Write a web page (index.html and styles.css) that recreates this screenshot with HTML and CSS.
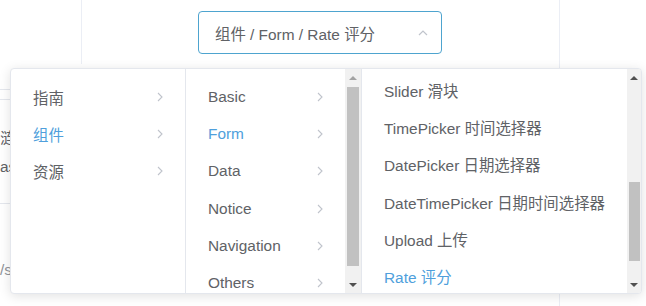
FILE: index.html
```html
<!DOCTYPE html>
<html lang="zh-CN">
<head>
    <meta charset="UTF-8">
    <title>Cascader 级联选择器</title>
    <link rel="stylesheet" href="styles.css">
</head>
<body>
    <div class="page">
        <div class="side">
            <div class="side-rule"></div>
            <div class="side-rule second"></div>
            <p class="side-text first">涟</p>
            <p class="side-text">as</p>
            <div class="side-rule third"></div>
            <p class="side-text last">/s</p>
        </div>
        <div class="main">
            <div class="select">
                <span class="select-label">组件 / Form / Rate 评分</span>
                <svg class="select-arrow" width="10" height="7" viewBox="0 0 10 7">
                    <polyline points="1,6 5,2 9,6" fill="none" stroke="#c0c4cc" stroke-width="1.2"/>
                </svg>
            </div>
        </div>
        <div class="aside"></div>
    </div>

    <!-- 级联下拉菜单 -->
    <div class="cascader-menus">
        <div class="menu menu-first">
            <ul class="menu-list">
                <li class="menu-item">指南<svg class="chevron" width="6" height="10" viewBox="0 0 6 10"><polyline points="1,1 5,5 1,9" fill="none" stroke="#c0c4cc" stroke-width="1.1"/></svg></li>
                <li class="menu-item active">组件<svg class="chevron" width="6" height="10" viewBox="0 0 6 10"><polyline points="1,1 5,5 1,9" fill="none" stroke="#c0c4cc" stroke-width="1.1"/></svg></li>
                <li class="menu-item">资源<svg class="chevron" width="6" height="10" viewBox="0 0 6 10"><polyline points="1,1 5,5 1,9" fill="none" stroke="#c0c4cc" stroke-width="1.1"/></svg></li>
            </ul>
        </div>
        <div class="menu menu-second">
            <ul class="menu-list">
                <li class="menu-item">Basic<svg class="chevron" width="6" height="10" viewBox="0 0 6 10"><polyline points="1,1 5,5 1,9" fill="none" stroke="#c0c4cc" stroke-width="1.1"/></svg></li>
                <li class="menu-item active">Form<svg class="chevron" width="6" height="10" viewBox="0 0 6 10"><polyline points="1,1 5,5 1,9" fill="none" stroke="#c0c4cc" stroke-width="1.1"/></svg></li>
                <li class="menu-item">Data<svg class="chevron" width="6" height="10" viewBox="0 0 6 10"><polyline points="1,1 5,5 1,9" fill="none" stroke="#c0c4cc" stroke-width="1.1"/></svg></li>
                <li class="menu-item">Notice<svg class="chevron" width="6" height="10" viewBox="0 0 6 10"><polyline points="1,1 5,5 1,9" fill="none" stroke="#c0c4cc" stroke-width="1.1"/></svg></li>
                <li class="menu-item">Navigation<svg class="chevron" width="6" height="10" viewBox="0 0 6 10"><polyline points="1,1 5,5 1,9" fill="none" stroke="#c0c4cc" stroke-width="1.1"/></svg></li>
                <li class="menu-item">Others<svg class="chevron" width="6" height="10" viewBox="0 0 6 10"><polyline points="1,1 5,5 1,9" fill="none" stroke="#c0c4cc" stroke-width="1.1"/></svg></li>
            </ul>
            <div class="scrollbar">
                <span class="scroll-btn up dim"></span>
                <div class="scroll-track"><div class="scroll-thumb thumb-second"></div></div>
                <span class="scroll-btn down"></span>
            </div>
        </div>
        <div class="menu menu-third">
            <ul class="menu-list scrolled">
                <li class="menu-item">Slider 滑块</li>
                <li class="menu-item">TimePicker 时间选择器</li>
                <li class="menu-item">DatePicker 日期选择器</li>
                <li class="menu-item">DateTimePicker 日期时间选择器</li>
                <li class="menu-item">Upload 上传</li>
                <li class="menu-item active">Rate 评分</li>
            </ul>
            <div class="scrollbar">
                <span class="scroll-btn up"></span>
                <div class="scroll-track"><div class="scroll-thumb thumb-third"></div></div>
                <span class="scroll-btn down"></span>
            </div>
        </div>
    </div>
</body>
</html>
```

FILE: styles.css
```css
body {
    margin: 0;
    width: 646px;
    height: 306px;
    overflow: hidden;
    position: relative;
    background-color: #fff;
    font-family: "Liberation Sans", Arial, "Noto Sans CJK SC", sans-serif;
    font-size: 15.4px;
    color: #606266;
}
.page {
    display: flex;
    height: 306px;
}
.side {
    width: 81px;
    height: 64px;
    border-right: 1px solid #ebeef5;
    overflow: visible;
}
.side-rule {
    margin-top: 89px;
    width: 10px;
    border-top: 1px solid #e4e7ed;
}
.side-rule.second {
    margin-top: 9px;
}
.side-rule.third {
    margin-top: 22px;
}
.side-text {
    margin: 0;
    width: 10px;
    overflow: hidden;
    line-height: 28px;
    white-space: nowrap;
}
.side-text.first {
    margin-top: 25px;
}
.side-text.last {
    margin-top: 52px;
    color: #909399;
}
.main {
    width: 477px;
    border-right: 1px solid #ebeef5;
    padding-top: 11px;
}
.aside {
    flex: 1;
}

/* 选择框 */
.select {
    margin-left: 116px;
    width: 244px;
    height: 43px;
    box-sizing: border-box;
    border: 1px solid #4ea4cf;
    border-radius: 4px;
    display: flex;
    align-items: center;
    padding: 0 13px 0 16px;
}
.select-label {
    flex: 1;
    white-space: nowrap;
}
.select-arrow {
    display: block;
}

/* 下拉菜单 */
.cascader-menus {
    position: absolute;
    left: 10px;
    top: 68px;
    display: flex;
    height: 226px;
    box-sizing: border-box;
    background-color: #fff;
    border: 1px solid #e4e7ed;
    border-radius: 4px;
    box-shadow: 0 2px 12px rgba(0, 0, 0, 0.12);
    overflow: hidden;
}
.menu {
    display: flex;
    height: 224px;
    border-right: 1px solid #e4e7ed;
    overflow: hidden;
}
.menu-first {
    width: 174px;
}
.menu-second {
    width: 175px;
}
.menu-third {
    width: 279px;
    border-right: none;
}
.menu-list {
    flex: 1;
    list-style: none;
    margin: 0;
    padding: 9px 0 0;
}
.menu-list.scrolled {
    padding-top: 2px;
}
.menu-item {
    display: flex;
    align-items: center;
    height: 37.3px;
    padding: 0 22px;
    white-space: nowrap;
}
.menu-item.active {
    color: #4f9fdc;
}
.chevron {
    margin-left: auto;
}

/* 滚动条 */
.scrollbar {
    width: 16px;
    display: flex;
    flex-direction: column;
    background-color: #f1f1f1;
}
.menu-third .scrollbar {
    width: 15px;
}
.scroll-btn {
    height: 17px;
    display: flex;
    align-items: center;
    justify-content: center;
}
.scroll-btn::before {
    content: '';
    border-left: 4px solid transparent;
    border-right: 4px solid transparent;
}
.scroll-btn.up::before {
    border-bottom: 4px solid #505050;
}
.scroll-btn.up.dim::before {
    border-bottom-color: #a3a3a3;
}
.scroll-btn.down::before {
    border-top: 4px solid #505050;
}
.scroll-track {
    flex: 1;
    padding: 0 2px;
}
.menu-third .scroll-track {
    padding: 0 1px 0 2px;
}
.scroll-thumb {
    background-color: #c1c1c1;
}
.thumb-second {
    margin-top: 1px;
    height: 179px;
}
.thumb-third {
    margin-top: 96px;
    height: 79px;
}
```
